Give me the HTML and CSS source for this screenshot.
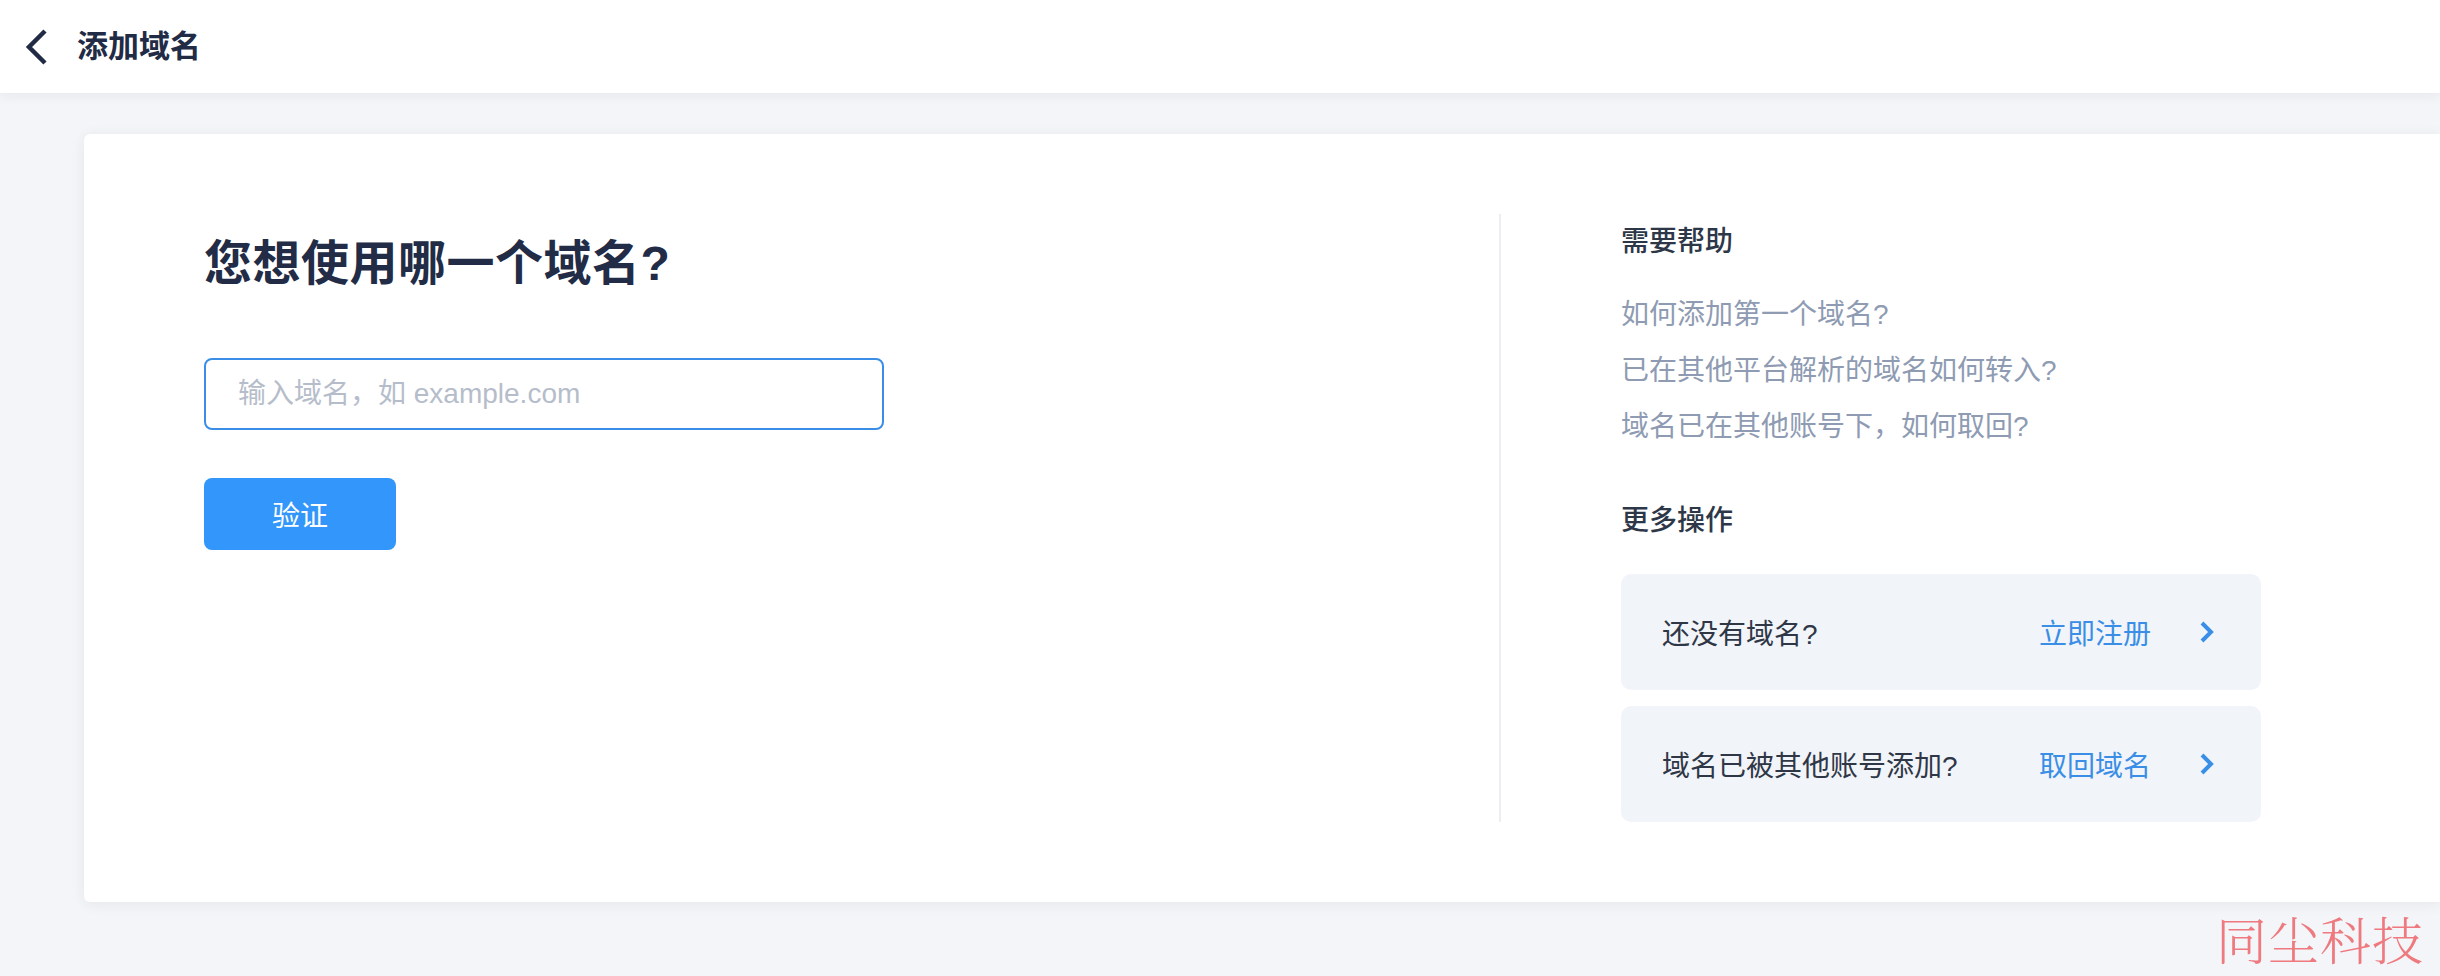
FILE: index.html
```html
<!DOCTYPE html>
<html lang="zh-CN">
<head>
<meta charset="utf-8">
<title>添加域名</title>
<link rel="stylesheet" href="styles.css">
</head>
<body>
<header class="topbar">
  <svg class="back" width="24" height="36" viewBox="0 0 24 36" aria-hidden="true">
    <polyline points="21,2 5,18 21,34" fill="none" stroke="#222b45" stroke-width="4.5" stroke-linejoin="miter"/>
  </svg>
  <h1 class="page-title">添加域名</h1>
</header>

<main class="card">
  <section class="left">
    <h2 class="question">您想使用哪一个域名?</h2>
    <input class="domain-input" type="text" placeholder="输入域名，如 example.com">
    <button class="verify">验证</button>
  </section>
  <aside class="right">
    <h3 class="side-title">需要帮助</h3>
    <ul class="help-list">
      <li>如何添加第一个域名?</li>
      <li>已在其他平台解析的域名如何转入?</li>
      <li>域名已在其他账号下，如何取回?</li>
    </ul>
    <h3 class="side-title more">更多操作</h3>
    <div class="action">
      <span class="action-text">还没有域名?</span>
      <span class="action-link">立即注册</span>
      <svg class="chev" width="16" height="22" viewBox="0 0 16 22" aria-hidden="true"><polyline points="3,2 12,11 3,20" fill="none" stroke="#3a8ee6" stroke-width="4"/></svg>
    </div>
    <div class="action">
      <span class="action-text">域名已被其他账号添加?</span>
      <span class="action-link">取回域名</span>
      <svg class="chev" width="16" height="22" viewBox="0 0 16 22" aria-hidden="true"><polyline points="3,2 12,11 3,20" fill="none" stroke="#3a8ee6" stroke-width="4"/></svg>
    </div>
  </aside>
</main>

<div class="watermark">同尘科技</div>
</body>
</html>
```

FILE: styles.css
```css
* { box-sizing: border-box; }

html, body {
  margin: 0;
  padding: 0;
}

body {
  min-height: 976px;
  background: #f4f5f8;
  font-family: "Liberation Sans", "Noto Sans CJK SC", sans-serif;
  color: #222b45;
  overflow: hidden;
  position: relative;
}

.topbar {
  height: 93px;
  background: #fff;
  display: flex;
  align-items: center;
  padding-left: 24px;
  box-shadow: 0 3px 12px rgba(30, 40, 70, 0.06);
  position: relative;
  z-index: 1;
}

.back { display: block; margin-right: 29px; }

.page-title {
  margin: 0;
  font-size: 31px;
  font-weight: 700;
  line-height: 1;
  color: #222b45;
}

.card {
  margin: 41px 0 0 84px;
  background: #fff;
  border-radius: 6px 0 0 6px;
  box-shadow: 0 2px 14px rgba(30, 40, 70, 0.07);
  display: flex;
  padding: 80px 0 80px 120px;
  height: 768px;
}

.left {
  width: 1295px;
  flex: none;
}

.question {
  margin: 14px 0 0;
  font-size: 48px;
  line-height: 72px;
  font-weight: 700;
  color: #222c46;
  letter-spacing: 0.5px;
}

.domain-input {
  display: block;
  margin-top: 58px;
  width: 680px;
  height: 72px;
  border: 2px solid #3a8ee8;
  border-radius: 8px;
  padding: 0 32px;
  font-family: "Liberation Sans", "Noto Sans CJK SC", sans-serif;
  font-size: 28px;
  color: #222b45;
  outline: none;
  background: #fff;
}

.domain-input::placeholder { color: #b6bdca; }

.verify {
  display: block;
  margin-top: 48px;
  width: 192px;
  height: 72px;
  border: none;
  border-radius: 8px;
  background: #3296fa;
  color: #fff;
  font-family: "Noto Sans CJK SC", sans-serif;
  font-size: 28px;
  cursor: pointer;
}

.right {
  border-left: 2px solid #eceef1;
  padding-left: 120px;
  flex: 1;
  min-width: 0;
}

.side-title {
  margin: 0;
  font-size: 28px;
  line-height: 56px;
  font-weight: 500;
  color: #2e3748;
}

.side-title.more { margin-top: 38px; margin-bottom: 25px; }

.help-list {
  list-style: none;
  margin: 17px 0 0;
  padding: 0;
}

.help-list li {
  font-size: 28px;
  line-height: 56px;
  color: #8e9bb2;
}

.action {
  width: 640px;
  height: 116px;
  background: #f1f4f9;
  border-radius: 10px;
  display: flex;
  align-items: center;
  padding: 0 46px 0 41px;
  margin-bottom: 16px;
}

.action-text {
  flex: 1;
  font-size: 28px;
  color: #2f3747;
}

.action-link {
  font-size: 28px;
  color: #3a8ee6;
  margin-right: 48px;
}

.chev { display: block; }

.watermark {
  position: absolute;
  right: 16px;
  bottom: 12px;
  font-family: "Noto Serif CJK SC", "Noto Sans CJK SC", serif;
  font-weight: 300;
  font-size: 51px;
  line-height: 1;
  color: rgba(236, 90, 96, 0.8);
  letter-spacing: 1px;
}
```
